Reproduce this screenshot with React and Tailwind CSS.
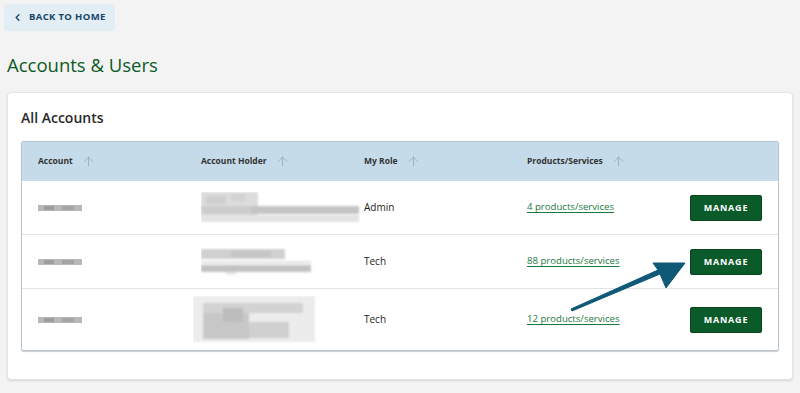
import { ChevronLeft, ArrowUp } from 'lucide-react';

const rows = [
  { role: 'Admin', products: '4 products/services', h: 'h-[53px]', holder: 'a' },
  { role: 'Tech', products: '88 products/services', h: 'h-[54px]', holder: 'b' },
  { role: 'Tech', products: '12 products/services', h: 'h-[62px]', holder: 'c' },
];

// blurred placeholder for redacted text
function Redacted({ kind }) {
  if (kind === 'a') {
    return (
      <svg width="160" height="32" viewBox="0 0 160 32" className="block">
        <defs><filter id="ba"><feGaussianBlur stdDeviation="0.8" /></filter></defs>
        <g filter="url(#ba)">
          <rect x="0" y="0" width="57" height="30" fill="#dcdcdc" />
          <rect x="5" y="4" width="20" height="8" fill="#cfcfcf" />
          <rect x="30" y="2" width="14" height="7" fill="#d2d2d2" />
          <rect x="50" y="14" width="108" height="8" fill="#c4c4c4" />
          <rect x="0" y="14" width="50" height="8" fill="#cdcdcd" />
          <rect x="0" y="23" width="158" height="7" fill="#e3e3e3" />
        </g>
      </svg>
    );
  }
  if (kind === 'b') {
    return (
      <svg width="115" height="28" viewBox="0 0 115 28" className="block">
        <defs><filter id="bb"><feGaussianBlur stdDeviation="0.8" /></filter></defs>
        <g filter="url(#bb)">
          <rect x="0" y="1" width="84" height="10" fill="#d0d0d0" />
          <rect x="30" y="3" width="40" height="6" fill="#c5c5c5" />
          <rect x="0" y="13" width="110" height="3" fill="#e6e6e6" />
          <rect x="0" y="17" width="110" height="7" fill="#c2c2c2" />
          <rect x="25" y="24" width="10" height="3" fill="#e8e8e8" />
        </g>
      </svg>
    );
  }
  return (
    <svg width="130" height="48" viewBox="0 0 130 48" className="block">
      <defs><filter id="bc"><feGaussianBlur stdDeviation="0.8" /></filter></defs>
      <g filter="url(#bc)">
        <rect x="0" y="0" width="122" height="46" fill="#ececec" />
        <rect x="10" y="7" width="100" height="10" fill="#d2d2d2" />
        <rect x="10" y="17" width="46" height="26" fill="#c7c7c7" />
        <rect x="56" y="26" width="40" height="16" fill="#d0d0d0" />
        <rect x="30" y="12" width="20" height="14" fill="#bcbcbc" />
      </g>
    </svg>
  );
}

function AccountBlur() {
  return (
    <svg width="44" height="8" viewBox="0 0 44 8" className="block">
      <defs><filter id="bacc"><feGaussianBlur stdDeviation="0.6" /></filter></defs>
      <g filter="url(#bacc)">
        <rect x="0" y="1" width="44" height="6" fill="#b8b8b8" />
        <rect x="6" y="2" width="10" height="4" fill="#9e9e9e" />
        <rect x="24" y="2" width="12" height="4" fill="#a4a4a4" />
      </g>
    </svg>
  );
}

function HeaderCell({ label }) {
  return (
    <div className="flex items-center gap-[8px]">
      <span className="text-[8.5px] font-bold text-[#333]">{label}</span>
      <ArrowUp size={15} strokeWidth={1.3} className="text-[#9aa6ae]" />
    </div>
  );
}

export default function App() {
  return (
    <div
      className="relative w-[800px] h-[393px] overflow-hidden bg-[#f3f3f3]"
      style={{ fontFamily: '"Open Sans", "Noto Sans", sans-serif' }}
    >
      <div className="pt-[4px] pl-[4px]">
        <button className="flex items-center h-[27px] w-[111px] pl-[8px] gap-[6px] bg-[#e2edf4] rounded-[2px] whitespace-nowrap">
          <ChevronLeft size={11} strokeWidth={3} className="text-[#17466b]" />
          <span className="text-[9.5px] font-bold tracking-[0.35px] text-[#17466b]">BACK TO HOME</span>
        </button>
      </div>

      <h1 className="ml-[7px] mt-[21px] text-[18.5px] leading-[26px] text-[#0d5b25]">Accounts &amp; Users</h1>

      <div className="mx-[7px] mt-[14px] h-[288px] bg-white rounded-[4px] border border-[#e4e4e4] shadow-[0_1px_2px_rgba(0,0,0,0.12)] px-[13px] pt-[15px]">
        <h2 className="text-[14px] font-semibold leading-[20px] text-[#2a2a2a]">All Accounts</h2>

        <div className="mt-[13px] border border-[#b9c4cc] rounded-[2px] shadow-[0_1px_1px_rgba(0,0,0,0.2)] overflow-hidden">
          <div className="grid grid-cols-[163px_163px_163px_163px_1fr] items-center h-[39px] pl-[16px] bg-[#c5dbe9]">
            <HeaderCell label="Account" />
            <HeaderCell label="Account Holder" />
            <HeaderCell label="My Role" />
            <HeaderCell label="Products/Services" />
            <div />
          </div>
          {rows.map((r, i) => (
            <div
              key={i}
              className={`grid grid-cols-[163px_163px_163px_163px_1fr] items-center pl-[16px] pr-[16px] ${r.h} ${i > 0 ? 'border-t border-[#e3e3e3]' : ''}`}
            >
              <AccountBlur />
              <div className={r.holder === 'c' ? '-ml-[8px]' : ''}>
                <Redacted kind={r.holder} />
              </div>
              <span className="text-[10px] text-[#222]">{r.role}</span>
              <a className="text-[9.6px] text-[#1b7a3c] underline underline-offset-2">{r.products}</a>
              <button className="h-[26px] w-[72px] bg-[#0b5a2a] border border-[#08461f] rounded-[2px] text-white text-[9px] font-bold tracking-[0.8px]">
                MANAGE
              </button>
            </div>
          ))}
        </div>
      </div>

      {/* annotation arrow */}
      <svg className="absolute left-0 top-0 pointer-events-none" width="800" height="393" viewBox="0 0 800 393">
        <path
          d="M572 311 L660 274 L666 288 L685 263 L653 263 L658 270 L571 309 Z"
          fill="#0f5876"
          stroke="#0f5876"
          strokeWidth="1"
          strokeLinejoin="round"
        />
      </svg>
    </div>
  );
}
